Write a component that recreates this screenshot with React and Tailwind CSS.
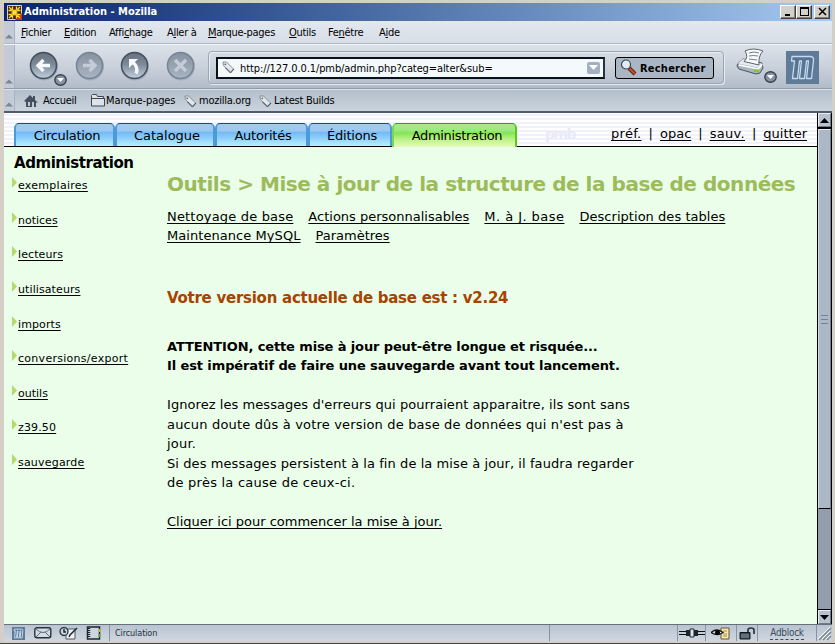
const UI = "font-['DejaVu_Sans_Condensed','DejaVu_Sans',sans-serif] [font-stretch:condensed]";

function Grip({ className = "" }) {
  return (
    <div className={`flex w-[11px] shrink-0 items-end justify-center border-r border-[#a9b3c0] bg-[#c3cbd7] ${className}`}>
      <svg width="8" height="5" viewBox="0 0 8 5"><path d="M0 4.5 4 .5 8 4.5z" fill="#7d8794" /></svg>
    </div>
  );
}

function RoundButton({ children, dim, className = "" }) {
  return (
    <svg width="30" height="30" viewBox="0 0 30 30" className={`shrink-0 ${className}`}>
      <defs>
        <linearGradient id="orb" x1="0" y1="0" x2="0" y2="1"><stop offset="0" stopColor="#67717e" /><stop offset=".45" stopColor="#7d8998" /><stop offset="1" stopColor="#c3d0dc" /></linearGradient>
        <linearGradient id="orbDim" x1="0" y1="0" x2="0" y2="1"><stop offset="0" stopColor="#87919f" /><stop offset="1" stopColor="#a9b5c2" /></linearGradient>
      </defs>
      <circle cx="15" cy="15.5" r="14" fill="#a3aebb" />
      <circle cx="14.5" cy="14.5" r="13" fill={dim ? "url(#orbDim)" : "url(#orb)"} stroke={dim ? "#778393" : "#434e5d"} strokeWidth="1.5" />
      <g fill="none" stroke={dim ? "#c3ccd7" : "#f5f9fc"} strokeWidth="3.4">{children}</g>
    </svg>
  );
}

function SmallDrop() {
  return (
    <svg width="13" height="12" viewBox="0 0 13 12" className="shrink-0">
      <ellipse cx="6.5" cy="6" rx="5.7" ry="5.2" fill="#8592a2" stroke="#364150" strokeWidth="1.4" />
      <path d="M3 4h7L6.500 8z" fill="#fff" />
    </svg>
  );
}

function Tag() {
  return (
    <svg width="13" height="13" viewBox="0 0 13 13" className="shrink-0">
      <path d="M1 1 4.500 1 11.500 8 8.500 11 1.300 4.500z" fill="#e3e8ec" stroke="#7c8792" strokeWidth=".9" />
      <path d="M12 8 8.500 12 3.500 7" fill="none" stroke="#3e474f" />
      <circle cx="3.300" cy="3.300" r=".9" fill="#5c6670" />
    </svg>
  );
}

function MozM({ size, sw = 1.3, className = "" }) {
  return (
    <svg width={size} height={size} viewBox="0 0 33 33" className={`shrink-0 ${className}`}>
      <rect width="33" height="33" fill="#5f7b97" />
      <path d="M6 5.500H24q4 0 3.500 4L25.500 27.500H20.500L22.500 10H20.500L18.500 27.500H13.500L15.500 10H13.500L11.500 27.500H6.500L8.500 10H5.500z" fill="#587490" stroke="#c5dcf0" strokeWidth={sw} strokeLinejoin="round" />
    </svg>
  );
}

function WinButton({ children, className = "" }) {
  return (
    <div className={`flex h-[14px] w-[16px] items-center justify-center border border-t-white border-l-white border-r-[#404040] border-b-[#404040] bg-[#d4d0c8] shadow-[inset_-1px_-1px_0_#808080] ${className}`}>
      <svg width="11" height="10" viewBox="0 0 11 10" fill="none" stroke="#000" shapeRendering="crispEdges">{children}</svg>
    </div>
  );
}

function TitleBar() {
  return (
    <div className="flex h-[18px] shrink-0 items-center bg-linear-to-r from-[#0a246a] to-[#a6caf0] pr-[2px] pl-[3px]">
      <svg width="15" height="15" viewBox="0 0 15 15">
        <rect width="15" height="15" rx="1" fill="#d8d2c4" />
        <path d="M1 1h13v13H1z" fill="#3c2416" />
        <path d="M15 8v7H8z" fill="#d92d12" />
        <path d="M5.500 1.500v12M9.500 1.500v12M1.500 5.500h12M1.500 9.500h12M2 2l3 3M13 2l-3 3M2 13l3-3M13 13l-3-3" stroke="#ffdf2a" strokeWidth="1.300" />
        <rect x="5" y="5" width="5" height="5" fill="#ffe23a" stroke="#c98a10" strokeWidth=".7" />
      </svg>
      <span className="ml-[2px] text-[11px] font-bold whitespace-nowrap text-white">Administration - Mozilla</span>
      <div className="ml-auto flex">
        <WinButton><path d="M2 7.500h5M2 8.500h5" /></WinButton>
        <WinButton><path d="M1.500 .5h8v8h-8zM1 1.500h9" /></WinButton>
        <WinButton className="ml-[2px]"><path d="M2 1l7 7M9 1 2 8" strokeWidth="1.500" shapeRendering="auto" /></WinButton>
      </div>
    </div>
  );
}

const menus = [
  ["", "F", "ichier", "w-[43px]"],
  ["", "E", "dition", "w-[45px]"],
  ["Affi", "c", "hage", "w-[58px]"],
  ["A", "l", "ler à", "w-[41px]"],
  ["", "M", "arque-pages", "w-[81px]"],
  ["", "O", "utils", "w-[39px]"],
  ["Fe", "n", "être", "w-[51px]"],
  ["A", "i", "de", "w-[30px]"],
];

function MenuBar() {
  return (
    <div className="flex h-[23px] shrink-0 border-b border-[#b0bac6] bg-linear-to-b from-[#e3e8ef] to-[#d7dee7]">
      <Grip className="pb-[4px]" />
      <div className="flex items-center pt-[3px] pl-[6px] text-[11px] tracking-[-0.3px]">
        {menus.map(([a, u, b, w]) => (
          <span key={u + b} className={`whitespace-nowrap ${w}`}>{a}<u className="underline-offset-1">{u}</u>{b}</span>
        ))}
      </div>
    </div>
  );
}

function ToolBar() {
  return (
    <div className="flex h-[45px] shrink-0 border-t border-b border-t-[#f1f5f8] border-b-[#8e9baa] bg-linear-to-b from-[#dce2e9] via-[#c9d1db] to-[#b2bcc9]">
      <Grip className="pb-[4px]" />
      <div className="flex flex-1 items-start pt-[6px] pl-[14px]">
        <RoundButton><path d="M21 14.500H10M14.500 9 9 14.500l5.500 5.500" /></RoundButton>
        <div className="-ml-[5px] pt-[23px]"><SmallDrop /></div>
        <RoundButton dim className="ml-[8px]"><path d="M8 14.500h11M14.500 9l5.500 5.500-5.500 5.500" /></RoundButton>
        <RoundButton className="ml-[15px]"><path d="M16 22.500q3-6-3.500-11.500" /><path d="M9 8h9l-9 9z" fill="#f5f9fc" stroke="none" /></RoundButton>
        <RoundButton dim className="ml-[16px]"><path d="M9 9l11 11M20 9 9 20" /></RoundButton>
        <div className="ml-[12px] flex h-[33px] w-[516px] items-center rounded-[4px] border border-[#9aa6b5] pl-[7px] shadow-[inset_1px_1px_0_#e9eef3,1px_1px_0_#e4eaf0]">
          <div className="flex h-[22px] w-[389px] items-center border-2 border-[#0b1118] border-r-[#27323c] bg-[#f4fafb] pr-[3px] pl-[4px]">
            <Tag />
            <span className="mt-[3px] ml-[5px] text-[11px] tracking-[-0.1px] whitespace-nowrap">http://127.0.0.1/pmb/admin.php?categ=alter&amp;sub=</span>
            <div className="ml-auto flex h-[12px] w-[13px] items-center justify-center rounded-[2px] bg-[#a4b0c0]">
              <svg width="9" height="5" viewBox="0 0 9 5"><path d="M0 0h9L4.500 5z" fill="#fff" /></svg>
            </div>
          </div>
          <div className="ml-[10px] flex h-[22px] w-[99px] items-center rounded-[3px] border border-black bg-[#abb6c4] pl-[4px]">
            <svg width="17" height="17" viewBox="0 0 17 17">
              <path d="M9 9l6 6" stroke="#5c1f10" strokeWidth="4" /><path d="M9.500 9.500l5 5" stroke="#d25327" strokeWidth="2" />
              <circle cx="6" cy="5.500" r="4.500" fill="#e1edf5" stroke="#384450" strokeWidth="1.200" />
            </svg>
            <span className="mt-[3px] ml-[3px] text-[11px] font-bold tracking-[0.22px]">Rechercher</span>
          </div>
        </div>
        <svg width="30" height="28" viewBox="0 0 30 28" className="ml-[12px] -mt-[3px]">
          <path d="M2 15.500 7 11l19 4 1 5-3 5-4 1L3 21l-2-3z" fill="#a9b4be" stroke="#4a545e" />
          <path d="M2 15.500 24 20l3-4-20-5z" fill="#e6ecf1" />
          <path d="M9 3q8-4 18 0-5 5-4 14L8 13.500Q13 9 9 3z" fill="#f7fafb" stroke="#5b6670" />
          <path d="M13 5q5-2 10 0M13 8q4-1 9 0M13 11l8 1" fill="none" stroke="#747f88" />
          <path d="M3 17l19 4 4-4" fill="none" stroke="#fff" strokeWidth="1.500" />
          <path d="M18 22.500l5 .5" stroke="#72d31c" strokeWidth="2.500" />
        </svg>
        <div className="-ml-[2px] pt-[20px]"><SmallDrop /></div>
        <MozM size={33} className="ml-[9px]" />
      </div>
    </div>
  );
}

function Bookmarks() {
  return (
    <div className="flex h-[24px] shrink-0 border-t border-b-2 border-t-[#dce3ea] border-b-[#505c6a] bg-linear-to-b from-[#b3bfcb] to-[#cad4dd]">
      <Grip className="pb-[4px]" />
      <div className="flex items-center pt-[2px] pl-[9px] text-[11px] tracking-[-0.25px] whitespace-nowrap">
        <svg width="14" height="12" viewBox="0 0 14 12" className="-mt-[2px]"><path d="M0 6 6 0l3 3V1h2v4l3 2.500h-2V12H2V7z" fill="#45505f" /><path d="M4 7h2v4H4zM8 7h2v5H8z" fill="#bcc8d3" /></svg>
        <span className="ml-[5px] w-[39px]">Accueil</span>
        <svg width="15" height="13" viewBox="0 0 15 13" className="ml-[9px] -mt-[2px]"><path d="M.5 12V1.500l1-1h4l1 2h6v2h1V12z" fill="#dce4ea" stroke="#3d4650" /><path d="M1 4.500h13" stroke="#3d4650" /></svg>
        <span className="w-[78px] tracking-[-0.1px]">Marque-pages</span>
        <Tag />
        <span className="ml-[2px] w-[60px]">mozilla.org</span>
        <Tag />
        <span className="ml-[2px]">Latest Builds</span>
      </div>
    </div>
  );
}

const tabs = [
  ["Circulation", "w-[101px] pl-[5px] tracking-[-0.3px]"],
  ["Catalogue", "w-[100px] pl-[4px]"],
  ["Autorités", "w-[93px] pl-[3px] tracking-[-0.2px]"],
  ["Éditions", "w-[84px] pl-[4px] tracking-[-0.2px]"],
];

function Header() {
  return (
    <div className="flex h-[34px] shrink-0 items-end border-b border-black bg-[repeating-linear-gradient(0deg,#fff_0px,#fff_2px,#f1f1fc_2px,#f1f1fc_4px)] pl-[10px] text-[13px]">
      {tabs.map(([t, c]) => (
        <div key={t} className={`flex h-[23px] items-center justify-center rounded-t-[5px] border-t border-r-2 border-l-2 border-t-[#23448a] border-r-[#4c9ad8] border-l-[#4c9ad8] bg-[linear-gradient(#a5cbec_0%,#9cc8ee_32%,#74b9f5_38%,#8fd0fb_65%,#b6f1fd_100%)] pt-[2px] ${c}`}>{t}</div>
      ))}
      <div className="-mb-px flex h-[24px] w-[125px] items-center justify-center rounded-t-[5px] border-t border-r-2 border-l-2 border-t-[#3f8f44] border-r-[#59c81c] border-l-[#7bd74a] bg-[linear-gradient(#a8ec8c_0%,#9be87e_30%,#82e454_38%,#b9f283_65%,#e8fbbd_100%)] pt-px pl-[5px] tracking-[-0.33px]">Administration</div>
      <span className="mb-[1px] ml-[28px] text-[14px] font-bold tracking-[-1.5px] text-[#e8ebf8]">pmb</span>
      <div className="mr-[10px] mb-[4px] ml-auto flex gap-[7px] leading-[17px]">
        <Link className="tracking-[0.3px]">préf.</Link><span>|</span><Link>opac</Link><span>|</span><Link className="tracking-[0.3px]">sauv.</Link><span>|</span><Link>quitter</Link>
      </div>
    </div>
  );
}

function Link({ children, className = "" }) {
  return <a className={`whitespace-nowrap underline decoration-1 underline-offset-2 [text-decoration-skip-ink:none] ${className}`}>{children}</a>;
}

const side = [
  ["exemplaires", "tracking-[0.27px]"],
  ["notices", ""],
  ["lecteurs", "tracking-[0.1px]"],
  ["utilisateurs", "tracking-[0.1px]"],
  ["imports", "tracking-[0.1px]"],
  ["conversions/export", "tracking-[0.28px]"],
  ["outils", ""],
  ["z39.50", "tracking-[0.15px]"],
  ["sauvegarde", "tracking-[0.2px]"],
];

function Sidebar() {
  return (
    <div className="w-[163px] shrink-0 pt-[7px]">
      <h1 className="pl-[10px] text-[15px] leading-[18px] font-bold tracking-[-0.45px]">Administration</h1>
      <ul className="pt-[5px] pl-[8px] text-[11px]">
        {side.map(([s, c]) => (
          <li key={s} className="flex h-[34.63px] items-start">
            <svg width="5" height="11" viewBox="0 0 5 11" className="mr-[1px]"><path d="M0 0 5 5.500 0 11z" fill="#b4da6e" /></svg>
            <Link className={`mt-[2px] leading-[13px] ${c}`}>{s}</Link>
          </li>
        ))}
      </ul>
    </div>
  );
}

function Main() {
  return (
    <div className="pt-[24px] whitespace-nowrap">
      <h2 className="text-[20px] leading-[26px] font-bold tracking-[-0.46px] text-[#9dbb5a]">Outils &gt; Mise à jour de la structure de la base de données</h2>
      <div className="mt-[10px] text-[13px] leading-[19px]">
        <div className="flex gap-[15px]">
          <Link className="tracking-[0.18px]">Nettoyage de base</Link><Link>Actions personnalisables</Link><Link className="tracking-[0.45px]">M. à J. base</Link><Link className="tracking-[0.04px]">Description des tables</Link>
        </div>
        <div className="flex gap-[15px]"><Link className="tracking-[0.06px]">Maintenance MySQL</Link><Link>Paramètres</Link></div>
      </div>
      <h3 className="mt-[43px] text-[15px] leading-[20px] font-bold tracking-[-0.26px] text-[#a84300]">Votre version actuelle de base est : v2.24</h3>
      <div className="mt-[28.5px] text-[13px] leading-[19.5px]">
        <p className="font-bold tracking-[-0.12px]">ATTENTION, cette mise à jour peut-être longue et risquée...</p>
        <p className="font-bold tracking-[-0.11px]">Il est impératif de faire une sauvegarde avant tout lancement.</p>
        <p className="mt-[19.5px] tracking-[0.06px]">Ignorez les messages d'erreurs qui pourraient apparaitre, ils sont sans</p>
        <p className="tracking-[0.17px]">aucun doute dûs à votre version de base de données qui n'est pas à</p>
        <p className="tracking-[0.2px]">jour.</p>
        <p className="tracking-[0.08px]">Si des messages persistent à la fin de la mise à jour, il faudra regarder</p>
        <p className="tracking-[0.24px]">de près la cause de ceux-ci.</p>
        <p className="mt-[19.5px]"><Link>Cliquer ici pour commencer la mise à jour.</Link></p>
      </div>
    </div>
  );
}

function ScrollButton({ d }) {
  return (
    <div className="flex h-[14px] items-center justify-center border border-t-[#e6edf3] border-l-[#e6edf3] border-r-[#6e7b8a] border-b-[#6e7b8a] bg-[#b7c2ce]">
      <svg width="9" height="5" viewBox="0 0 9 5"><path d={d} /></svg>
    </div>
  );
}

function ScrollBar() {
  return (
    <div className="flex w-[15px] shrink-0 flex-col border-x border-black bg-[#939dac]">
      <ScrollButton d="M0 5 4.500 0 9 5z" />
      <div className="h-[2px] bg-black" />
      <div className="flex h-[380px] flex-col items-center justify-center gap-[3px] border border-t-[#e0e8f0] border-l-[#d5dde6] border-r-[#748192] border-b-black bg-[#adb8c6]">
        <i className="h-px w-[7px] bg-[#71829a]" /><i className="h-px w-[7px] bg-[#71829a]" /><i className="h-px w-[7px] bg-[#71829a]" />
      </div>
      <div className="mt-auto border-t border-black"><ScrollButton d="M0 0h9L4.500 5z" /></div>
    </div>
  );
}

function StatusBar() {
  return (
    <div className="flex h-[17px] shrink-0 items-center border-t border-[#66717e] bg-linear-to-b from-[#b9c4d1] to-[#cfd7e0] text-[9px]">
      <MozM size={13} sw={2.5} className="ml-[8px]" />
      <svg width="18" height="12" viewBox="0 0 18 12" className="ml-[9px]"><rect x=".8" y=".8" width="16" height="10" rx="2" fill="#d4dce3" stroke="#28323b" strokeWidth="1.400" /><path d="M2 2q7 7 14 0M2 10l5-5M16 10l-5-5" fill="none" stroke="#5e6a75" /></svg>
      <svg width="20" height="13" viewBox="0 0 20 13" className="ml-[7px]"><path d="M7 2h9v10H7z" fill="#eef2f4" stroke="#4d5760" /><circle cx="5" cy="4.500" r="4" fill="#cbd5dd" stroke="#26323d" strokeWidth="1.300" /><path d="M5 2v3h2M18 1l-7 7-1 2" fill="none" stroke="#1e2932" strokeWidth="1.500" /></svg>
      <svg width="15" height="14" viewBox="0 0 15 14" className="ml-[7px]"><rect x="1.500" y="1" width="12" height="12" fill="#cbd6df" stroke="#1d2731" strokeWidth="1.500" /><path d="M3 2v10" stroke="#1d2731" strokeWidth="2.500" strokeDasharray="1 1" /><path d="M13.500 3v3" stroke="#dfae2c" strokeWidth="2" /><path d="M13.500 8v3" stroke="#5ba83d" strokeWidth="2" /></svg>
      <div className="ml-[8px] h-full border-l border-[#8794a2]" />
      <span className="mt-[2px] ml-[5px] tracking-[-0.1px] text-[#26313f]">Circulation</span>
      <div className="ml-auto flex h-full items-center">
        <div className="h-full w-[128px] border-l border-[#8794a2]" />
        <div className="flex h-full w-[28px] items-center justify-center border-l border-[#8794a2]">
          <svg width="26" height="12" viewBox="0 0 26 12"><path d="M0 4.500h8M0 7.500h8M18 4.500h8M18 7.500h8" stroke="#111" /><path d="M7 3h4v6H7zM15 3h4v6h-4z" fill="#1e252b" /><path d="M11 2h4v8h-4z" fill="#dae2e8" stroke="#1e252b" /></svg>
        </div>
        <div className="flex h-full w-[31px] items-center justify-center border-l border-[#8794a2]">
          <svg width="20" height="13" viewBox="0 0 20 13"><path d="M10 1h8v11h-8z" fill="#f7e7b3" stroke="#66572b" /><path d="M12 4h4M12 7h4M12 9h4" stroke="#a88f4e" /><path d="M0 5.500q6-5 12 0-5 4-12 0z" fill="#dde5eb" stroke="#111" strokeWidth="1.300" /><circle cx="6.500" cy="5.500" r="2.500" /></svg>
        </div>
        <div className="flex h-full w-[21px] items-center justify-center border-l border-[#8794a2]">
          <svg width="17" height="13" viewBox="0 0 17 13"><path d="M9 6V3q0-2 3-2t3 2v4" fill="none" stroke="#2a343e" strokeWidth="1.700" /><path d="M1 5.500h10V12H1z" fill="#3c4752" stroke="#111a22" /><path d="M2 8h8M2 10h8" stroke="#8b97a4" /></svg>
        </div>
        <div className="flex h-full w-[60px] items-center justify-center border-x border-[#8794a2] text-[10px] tracking-[-0.3px] text-[#3c4b5f]"><span className="border-b border-dashed border-[#3c4b5f] leading-[12px]">Adblock</span></div>
        <svg width="14" height="16" viewBox="0 0 14 16" className="ml-[1px]"><path d="M1 15 13 3M5 15l8-8M9 15l4-4" stroke="#7b8795" strokeWidth="1.500" /><path d="M0 14 12 2M4 14l8-8M8 14l4-4" stroke="#fff" /></svg>
      </div>
    </div>
  );
}

export default function App() {
  return (
    <div className="h-[644px] w-[835px] border-b border-[#45413e]">
      <div className={`flex h-[643px] w-[835px] flex-col overflow-hidden border-t-[3px] border-r-[3px] border-b-2 border-l-4 border-[#d4d0c8] bg-[#eafeea] text-black ${UI}`}>
        <TitleBar />
        <MenuBar />
        <ToolBar />
        <Bookmarks />
        <div className="flex min-h-0 flex-1">
          <div className="flex min-w-0 flex-1 flex-col font-['DejaVu_Sans',sans-serif] [font-stretch:normal]">
            <Header />
            <div className="flex flex-1 bg-[#eafeea]">
              <Sidebar />
              <Main />
            </div>
          </div>
          <ScrollBar />
        </div>
        <StatusBar />
      </div>
    </div>
  );
}
